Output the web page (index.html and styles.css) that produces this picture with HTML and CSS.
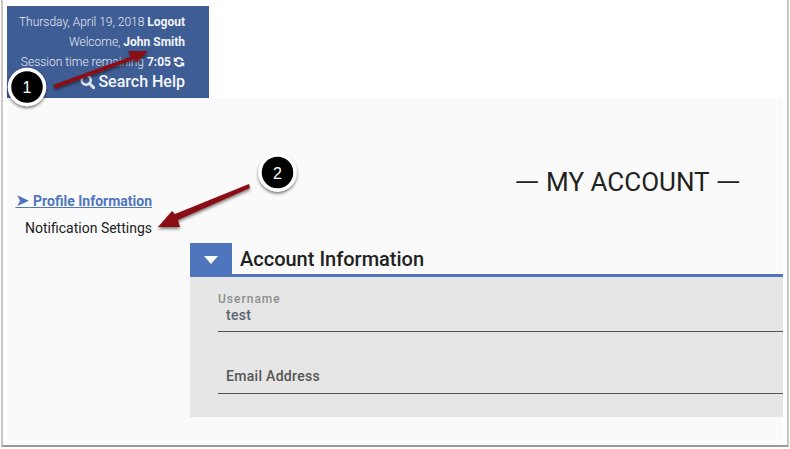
FILE: index.html
```html
<!DOCTYPE html>
<html lang="en">
<head>
<meta charset="utf-8">
<title>My Account</title>
<link rel="stylesheet" href="styles.css">
</head>
<body>
<div class="frame">
  <header class="top">
    <div class="line">Thursday, April 19, 2018 <b>Logout</b></div>
    <div class="line">Welcome, <b>John Smith</b></div>
    <div class="line">Session time remaining <b>7:05</b><svg class="refresh" viewBox="0 0 16 16" width="12" height="12"><path d="M14.600 6.800A7 7 0 0 0 2.900 3.300L1 1.400V7.500H7L4.900 5.300A4.200 4.200 0 0 1 11.800 6.800zM1.400 9.200A7 7 0 0 0 13.100 12.700L15 14.600V8.500H9L11.100 10.700A4.200 4.200 0 0 1 4.200 9.200z" fill="#f2f4f8"/></svg></div>
    <div class="search">
      <svg viewBox="0 0 16 16" width="15" height="15"><circle cx="6.600" cy="6.600" r="4.900" fill="none" stroke="#dfe6f2" stroke-width="2.600"/><path d="M10.200 10.200l4.300 4.300" stroke="#dfe6f2" stroke-width="3.200" stroke-linecap="round"/></svg>
      <span>Search Help</span>
    </div>
  </header>
  <div class="content">
    <nav class="side">
      <a class="active" href="#"><span class="arrow">➤</span> Profile Information</a>
      <a class="plain" href="#">Notification Settings</a>
    </nav>
    <main class="main">
      <h1 class="title"><span class="dash">—</span> MY ACCOUNT <span class="dash">—</span></h1>
      <section class="panel">
        <div class="panel-head">
          <div class="toggle"><svg viewBox="0 0 14 8" width="14" height="8"><path d="M0 0h14L7 8z" fill="#fff"/></svg></div>
          <h2>Account Information</h2>
        </div>
        <div class="panel-body">
          <div class="field first">
            <label>Username</label>
            <div class="value">test</div>
          </div>
          <div class="field">
            <div class="value strong">Email Address</div>
          </div>
        </div>
      </section>
    </main>
  </div>
</div>
<svg class="annot" viewBox="0 0 790 449" width="790" height="449">
  <defs>
    <filter id="s" x="-30%" y="-30%" width="160%" height="160%"><feDropShadow dx="0" dy="2" stdDeviation="1.500" flood-color="#000" flood-opacity=".5"/></filter>
  </defs>
  <path d="M53 85L131 56.500 128 51 148 51 137 62 134 59.500 55 88.500z" fill="#8a1118" filter="url(#s)"/>
  <path d="M249 184L175 214 172 211 158 227 180 227 178 220 250 188z" fill="#8a1118" filter="url(#s)"/>
  <circle cx="27" cy="87" r="17.500" fill="#000" stroke="#fff" stroke-width="3.500" filter="url(#s)"/>
  <text x="27" y="93" class="num">1</text>
  <circle cx="277.500" cy="172.500" r="17.500" fill="#000" stroke="#fff" stroke-width="3.500" filter="url(#s)"/>
  <text x="277.500" y="178.500" class="num">2</text>
</svg>
</body>
</html>
```
FILE: styles.css
```css
* { box-sizing: border-box; }
html, body { margin: 0; padding: 0; background: #fff; }
body { width: 790px; height: 449px; overflow: hidden; position: relative; font-family: Roboto, "Liberation Sans", sans-serif; }
.frame {
  width: 788px; height: 447px; margin-left: 1px; padding: 6px 4px 4px 4px;
  border-left: 2px solid #c8c8c8; border-right: 2px solid #c8c8c8; border-bottom: 2px solid #9a9a9a;
  background: #fff; display: flex; flex-direction: column;
}
.top { width: 202px; height: 92px; background: #3f5d95; color: #e4e9f2; text-align: right; padding: 7px 24px 0 0; font-size: 12px; font-weight: 300; }
.line { height: 20px; line-height: 18px; white-space: nowrap; }
.line b { font-weight: 700; color: #f2f4f8; }
.refresh { vertical-align: -2px; margin-left: 2px; }
.search { display: flex; justify-content: flex-end; align-items: center; gap: 3px; height: 20px; margin-top: -2px; font-size: 16px; font-weight: 500; color: #f4f6fa; }
.content { flex: 1; background: #fafafa; display: flex; }
.side { width: 145px; margin-right: 38px; padding-top: 94px; display: flex; flex-direction: column; align-items: flex-end; font-size: 14px; flex: none; }
.side a { display: block; line-height: 18px; text-decoration: none; }
.active { color: #4f76bd; font-weight: 700; text-decoration: underline !important; margin-bottom: 9px; }
.arrow { font-family: "DejaVu Sans", sans-serif; font-size: 17px; line-height: 14px; }
.plain { color: #222; }
.main { flex: 1; padding-top: 68px; min-width: 0; }
.title { margin: 0 42px 0 0; text-align: right; font-size: 26px; line-height: 32px; font-weight: 400; color: #222; white-space: nowrap; }
.dash { font-size: 33px; line-height: 26px; font-weight: 300; vertical-align: -3px; }
.panel { margin-top: 45px; }
.panel-head { display: flex; align-items: flex-end; height: 34px; border-bottom: 3px solid #4f76bd; }
.toggle { width: 42px; height: 34px; margin-bottom: -3px; background: #4f76bd; display: flex; align-items: center; justify-content: center; }
.panel-head h2 { margin: 0 0 2px 8px; font-size: 20px; line-height: 26px; font-weight: 500; color: #212121; }
.panel-body { background: #e6e6e6; height: 140px; padding: 16px 0 0 28px; }
.field { border-bottom: 1px solid #555; height: 39px; }
.first label { display: block; font-size: 12px; line-height: 12px; font-weight: 500; letter-spacing: 1px; color: #8f8f8f; }
.value { padding-left: 8px; font-size: 14px; line-height: 16px; color: #5b6470; font-weight: 500; letter-spacing: .3px; }
.first .value { margin-top: 2px; }
.field + .field { height: 62px; padding-top: 36px; }
.strong { color: #555; }
.annot { position: absolute; left: 0; top: 0; pointer-events: none; }
.num { font-family: "Liberation Sans", sans-serif; font-size: 16px; fill: #fff; text-anchor: middle; }
```
